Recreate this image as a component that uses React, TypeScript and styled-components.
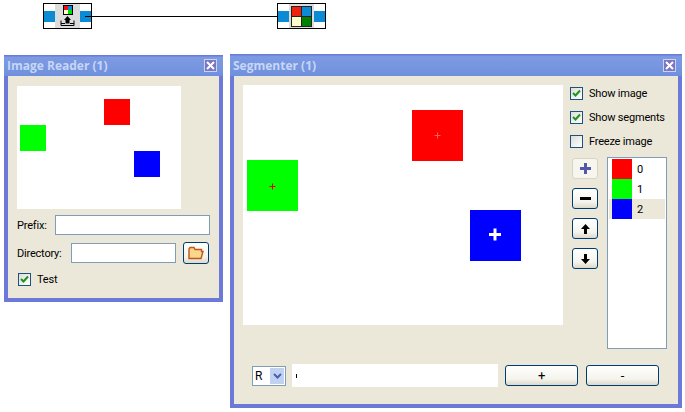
import React from "react";
import styled, { createGlobalStyle } from "styled-components";

const Global = createGlobalStyle`
  html, body { margin: 0; padding: 0; background: #fff; }
  body { font-family: "Roboto", "Liberation Sans", sans-serif; font-size: 11px; letter-spacing: -0.2px; color: #000; }
`;

const Desktop = styled.div`
  position: relative;
  width: 685px;
  height: 412px;
  overflow: hidden;
  background: #fff;
`;

/* Diagram */
const Node = styled.div<{ $x: number }>`
  position: absolute;
  left: ${(p) => p.$x}px;
  top: 3px;
  width: 49px;
  height: 26px;
  box-sizing: border-box;
  border: 1px solid #000;
  display: grid;
  grid-template-columns: 11px 25px 11px;
  background: #fff;
`;
const PortCell = styled.div`
  display: flex;
  align-items: center;
`;
const Port = styled.div`
  width: 100%;
  height: 11px;
  background: #0b8bd4;
`;
const NodeFace = styled.div`
  background: #dcdcdc;
  display: flex;
  flex-direction: column;
  align-items: center;
  justify-content: center;
`;
const Wire = styled.div`
  position: absolute;
  left: 85px;
  top: 16px;
  width: 199px;
  height: 1px;
  background: #000;
`;

/* Windows */
const Win = styled.section<{ $x: number; $y: number; $w: number; $h: number }>`
  position: absolute;
  left: ${(p) => p.$x}px;
  top: ${(p) => p.$y}px;
  width: ${(p) => p.$w}px;
  height: ${(p) => p.$h}px;
  box-sizing: border-box;
  border: 4px solid #6c79d8;
  border-top: 0;
  display: flex;
  flex-direction: column;
  background: #ebe8d9;
`;
const TitleBar = styled.header<{ $h: number }>`
  height: ${(p) => p.$h}px;
  margin: 0 -4px;
  padding: 0 6px 0 3px;
  flex: none;
  display: flex;
  align-items: center;
  justify-content: space-between;
  background: linear-gradient(to bottom, #6474d8 0, #7d9ae2 12%, #7796e0 60%, #6f8edd 100%);
`;
const Title = styled.h2`
  margin: 0;
  font: bold 12px "Open Sans", sans-serif;
  letter-spacing: 0;
  color: #c6d6f6;
`;
const CloseBtn = styled.div`
  width: 13px;
  height: 13px;
  box-sizing: border-box;
  border: 1px solid #c9d4f2;
  background: #7a76c4;
  display: flex;
  align-items: center;
  justify-content: center;
`;

const ReaderBody = styled.div`
  flex: 1;
  padding: 10px 9px 0 9px;
  display: flex;
  flex-direction: column;
`;
const Preview = styled.svg`
  display: block;
  flex: none;
  background: #fff;
`;
const FormRow = styled.div<{ $mt: number }>`
  display: flex;
  align-items: center;
  margin-top: ${(p) => p.$mt}px;
  height: 22px;
`;
const Label = styled.label<{ $w: number }>`
  width: ${(p) => p.$w}px;
  flex: none;
  white-space: nowrap;
  line-height: 14px;
  padding-top: 2px;
`;
const Field = styled.div<{ $w: number }>`
  width: ${(p) => p.$w}px;
  height: 20px;
  box-sizing: border-box;
  border: 1px solid #7f9db9;
  background: #fff;
`;
const Btn = styled.div<{ $w: number; $h: number }>`
  width: ${(p) => p.$w}px;
  height: ${(p) => p.$h}px;
  box-sizing: border-box;
  border: 1px solid #003c74;
  border-radius: 3px;
  background: linear-gradient(to bottom, #fff, #f4f3ec 70%, #dcd8ca);
  display: flex;
  align-items: center;
  justify-content: center;
  flex: none;
  font-size: 13px;
  line-height: 1;
`;
const FolderBtn = styled(Btn)`
  margin-left: 7px;
`;
const DisabledBtn = styled(Btn)`
  border: 1px solid #d8d5c6;
  background: #f7f6ee;
`;
const CheckRow = styled.label<{ $gap: number }>`
  display: flex;
  align-items: center;
  gap: ${(p) => p.$gap}px;
  height: 13px;
  white-space: nowrap;
`;
const Box = styled.span`
  width: 13px;
  height: 13px;
  flex: none;
  box-sizing: border-box;
  border: 1px solid #1c5180;
  background: linear-gradient(135deg, #dcdcd7, #fff);
  display: flex;
  align-items: center;
  justify-content: center;
`;
const Check: React.FC<{ on?: boolean; label: string; gap?: number }> = ({ on, label, gap = 6 }) => (
  <CheckRow $gap={gap}>
    <Box>
      {on && (
        <svg width="9" height="9" viewBox="0 0 9 9">
          <path d="M1 4l2.5 2.5L8 1.5" fill="none" stroke="#1f931f" strokeWidth="2" />
        </svg>
      )}
    </Box>
    {label}
  </CheckRow>
);
const TestRow = styled.div`
  padding: 9px 0 0 1px;
`;

const SegBody = styled.div`
  flex: 1;
  padding: 9px 12px 0 9px;
  display: flex;
  flex-direction: column;
`;
const SegMain = styled.div`
  display: flex;
  height: 264px;
`;
const Side = styled.div`
  margin-left: 7px;
  display: flex;
  flex-direction: column;
  padding-top: 2px;
  flex: 1;
`;
const Checks = styled.div`
  display: flex;
  flex-direction: column;
  gap: 11px;
`;
const SideLower = styled.div`
  display: flex;
  margin-top: 9px;
  padding-left: 2px;
`;
const ToolCol = styled.div`
  display: flex;
  flex-direction: column;
  gap: 9px;
  margin-top: 1px;
  margin-right: 9px;
`;
const SegList = styled.div`
  width: 60px;
  height: 192px;
  box-sizing: border-box;
  border: 1px solid #7f9db9;
  background: #fff;
  padding: 1px;
  display: flex;
  flex-direction: column;
`;
const SegRow = styled.div<{ $sel?: boolean }>`
  height: 20px;
  display: flex;
  align-items: center;
  padding-left: 3px;
  gap: 5px;
  background: ${(p) => (p.$sel ? "#ebe8d9" : "#fff")};
`;
const Swatch = styled.div<{ $c: string }>`
  width: 20px;
  height: 20px;
  background: ${(p) => p.$c};
`;
const Bottom = styled.div`
  margin-top: 15px;
  padding-left: 9px;
  display: flex;
  align-items: center;
`;
const Select = styled.div`
  width: 34px;
  height: 20px;
  box-sizing: border-box;
  border: 1px solid #7f9db9;
  background: #fff;
  display: flex;
  align-items: center;
  justify-content: space-between;
  padding: 1px 1px 1px 2px;
  font-size: 12px;
`;
const SelectArrow = styled.div`
  width: 14px;
  height: 16px;
  background: #c1d2f0;
  display: flex;
  align-items: center;
  justify-content: center;
`;
const Slider = styled.div`
  width: 206px;
  height: 23px;
  margin: 0 7px 0 6px;
  background: #fff;
  display: flex;
  align-items: center;
  padding-left: 4px;
  box-sizing: border-box;
`;
const SliderTick = styled.div`
  width: 1px;
  height: 4px;
  background: #000;
`;
const BottomButtons = styled.div`
  display: flex;
  gap: 8px;
`;

const Cross: React.FC<{ x: number; y: number; s: number; w: number; c: string }> = ({ x, y, s, w, c }) => (
  <path d={`M${x - s} ${y}H${x + s}M${x} ${y - s}V${y + s}`} stroke={c} strokeWidth={w} fill="none" />
);

const Arrow: React.FC<{ dir: "up" | "down" }> = ({ dir }) => (
  <svg width="9" height="10" viewBox="0 0 9 10">
    <path d={dir === "up" ? "M4.5 0L9 5H6V10H3V5H0Z" : "M4.5 10L9 5H6V0H3V5H0Z"} fill="#000" />
  </svg>
);

const CloseIcon = () => (
  <svg width="9" height="9" viewBox="0 0 9 9">
    <path d="M1 1l7 7M8 1l-7 7" stroke="#fff" strokeWidth="2" />
  </svg>
);

export default function App() {
  return (
    <Desktop>
      <Global />
      <Node $x={43}>
        <PortCell><Port /></PortCell>
        <NodeFace>
          <svg width="15" height="22" viewBox="0 0 15 22">
            <rect x="3" y="0" width="10" height="10" fill="#000" />
            <rect x="4" y="1" width="4" height="4" fill="#f01010" />
            <rect x="8" y="1" width="4" height="4" fill="#0b8bd4" />
            <rect x="4" y="5" width="4" height="4" fill="#ffffcc" />
            <rect x="8" y="5" width="4" height="4" fill="#00e000" />
            <path d="M7.5 11L11 15H9.5V18.5H5.5V15H4Z" fill="#000" />
            <path d="M1 15.5V20.5H14V15.5M1 18.5H5M10 18.5H14" fill="none" stroke="#000" />
          </svg>
        </NodeFace>
        <PortCell><Port /></PortCell>
      </Node>
      <Wire />
      <Node $x={277}>
        <PortCell><Port /></PortCell>
        <NodeFace>
          <svg width="21" height="21" viewBox="0 0 21 21">
            <rect width="21" height="21" fill="#222" />
            <rect x="1" y="1" width="9" height="9" fill="#ee2211" />
            <rect x="11" y="1" width="9" height="9" fill="#0b8bd4" />
            <rect x="1" y="11" width="9" height="9" fill="#ffffcc" />
            <rect x="11" y="11" width="9" height="9" fill="#008000" />
          </svg>
        </NodeFace>
        <PortCell><Port /></PortCell>
      </Node>

      <Win $x={4} $y={55} $w={219} $h={247}>
        <TitleBar $h={21}>
          <Title>Image Reader (1)</Title>
          <CloseBtn><CloseIcon /></CloseBtn>
        </TitleBar>
        <ReaderBody>
          <Preview width="164" height="123" viewBox="0 0 164 123">
            <rect x="87" y="13" width="26" height="26" fill="#f00" />
            <rect x="3" y="39" width="26" height="26" fill="#0f0" />
            <rect x="117" y="65" width="26" height="26" fill="#00f" />
          </Preview>
          <FormRow $mt={5}>
            <Label $w={38}>Prefix:</Label>
            <Field $w={155} />
          </FormRow>
          <FormRow $mt={6}>
            <Label $w={54}>Directory:</Label>
            <Field $w={105} />
            <FolderBtn $w={26} $h={22}>
              <svg width="16" height="14" viewBox="0 0 16 14">
                <path d="M1 3V12.5H13L15 5.5H13.5V3.5H7L6 1.5H2Z" fill="#fbd68c" stroke="#c0561a" strokeWidth="1.4" />
              </svg>
            </FolderBtn>
          </FormRow>
          <TestRow>
            <Check on label="Test" />
          </TestRow>
        </ReaderBody>
      </Win>

      <Win $x={230} $y={54} $w={452} $h={354}>
        <TitleBar $h={22}>
          <Title>Segmenter (1)</Title>
          <CloseBtn><CloseIcon /></CloseBtn>
        </TitleBar>
        <SegBody>
          <SegMain>
            <Preview width="320" height="240" viewBox="0 0 320 240">
              <rect x="169" y="25" width="51" height="51" fill="#f00" />
              <rect x="4" y="75" width="51" height="51" fill="#0f0" />
              <rect x="227" y="125" width="51" height="51" fill="#00f" />
              <Cross x={194.5} y={50.5} s={3} w={1} c="#ff6060" />
              <Cross x={29.5} y={101.5} s={3} w={1} c="#e00000" />
              <Cross x={252} y={149.5} s={6} w={3} c="#fff" />
            </Preview>
            <Side>
              <Checks>
                <Check on label="Show image" />
                <Check on label="Show segments" />
                <Check label="Freeze image" />
              </Checks>
              <SideLower>
                <ToolCol>
                  <DisabledBtn $w={26} $h={21}>
                    <svg width="11" height="11" viewBox="0 0 11 11">
                      <path d="M4 0H7V4H11V7H7V11H4V7H0V4H4Z" fill="#5458a8" />
                    </svg>
                  </DisabledBtn>
                  <Btn $w={26} $h={21}>
                    <svg width="11" height="3" viewBox="0 0 11 3"><rect width="11" height="3" fill="#000" /></svg>
                  </Btn>
                  <Btn $w={26} $h={21}><Arrow dir="up" /></Btn>
                  <Btn $w={26} $h={21}><Arrow dir="down" /></Btn>
                </ToolCol>
                <SegList>
                  <SegRow><Swatch $c="#f00" />0</SegRow>
                  <SegRow><Swatch $c="#0f0" />1</SegRow>
                  <SegRow $sel><Swatch $c="#00f" />2</SegRow>
                </SegList>
              </SideLower>
            </Side>
          </SegMain>
          <Bottom>
            <Select>
              R
              <SelectArrow>
                <svg width="9" height="6" viewBox="0 0 9 6">
                  <path d="M1 1l3.5 3.5L8 1" fill="none" stroke="#4d5fb0" strokeWidth="2" />
                </svg>
              </SelectArrow>
            </Select>
            <Slider><SliderTick /></Slider>
            <BottomButtons>
              <Btn $w={73} $h={21}>+</Btn>
              <Btn $w={73} $h={21}>-</Btn>
            </BottomButtons>
          </Bottom>
        </SegBody>
      </Win>
    </Desktop>
  );
}
